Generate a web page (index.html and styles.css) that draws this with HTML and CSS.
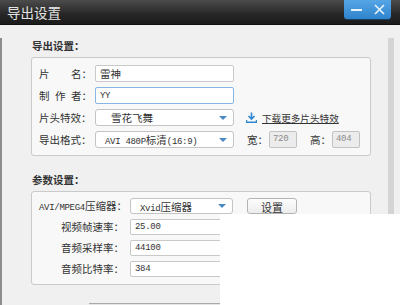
FILE: index.html
```html
<!DOCTYPE html>
<html lang="zh-CN">
<head>
  <meta charset="UTF-8">
  <title>导出设置</title>
  <link rel="stylesheet" href="styles.css">
</head>
<body>
  <div class="window">
    <div class="titlebar">
      <span class="title">导出设置</span>
      <div class="win-btns">
        <span class="wb-min"></span>
        <svg class="wb-close" width="11" height="11" viewBox="0 0 11 11"><path d="M1 1 L10 10 M10 1 L1 10" stroke="#e8f3fc" stroke-width="1.6"/></svg>
      </div>
    </div>

    <div class="content">
      <div class="section-title">导出设置：</div>
      <div class="group export-grid">
        <span class="lbl spread"><i>片</i><i>名：</i></span>
        <div class="field">雷神</div>
        <span></span>

        <span class="lbl spread"><i>制</i><i>作</i><i>者：</i></span>
        <div class="field focused"><span class="en">YY</span></div>
        <span></span>

        <span class="lbl">片头特效：</span>
        <div class="select"><span class="indent">雪花飞舞</span><span class="arrow"></span></div>
        <a class="dl-link" href="#">
          <svg width="11" height="11" viewBox="0 0 11 11"><path d="M5.5 0.5 V6.5 M2.5 4 L5.5 7 L8.5 4" stroke="#2f86d1" stroke-width="1.6" fill="none"/><path d="M0.5 8 V10.3 H10.5 V8" stroke="#2f86d1" stroke-width="1.4" fill="none"/></svg>
          <span>下载更多片头特效</span>
        </a>

        <span class="lbl">导出格式：</span>
        <div class="select"><span><span class="en">AVI 480P</span>标清<span class="en">(16:9)</span></span><span class="arrow"></span></div>
        <div class="size-row">
          <span>宽：</span><div class="field small disabled"><span class="en">720</span></div>
          <span class="h-lbl">高：</span><div class="field small disabled"><span class="en">404</span></div>
        </div>
      </div>

      <div class="section-title second">参数设置：</div>
      <div class="group param-grid">
        <span class="lbl right"><span class="en">AVI/MPEG4</span>压缩器：</span>
        <div class="select"><span><span class="en">Xvid</span>压缩器</span><span class="arrow"></span></div>
        <button class="btn">设置</button>

        <span class="lbl right">视频帧速率：</span>
        <div class="field"><span class="en">25.00</span></div>
        <span></span>

        <span class="lbl right">音频采样率：</span>
        <div class="field"><span class="en">44100</span></div>
        <span></span>

        <span class="lbl right">音频比特率：</span>
        <div class="field"><span class="en">384</span></div>
        <span></span>
      </div>
      <div class="bottom-bar"></div>
    </div>

    <div class="mask"></div>
  </div>
</body>
</html>
```

FILE: styles.css
```css
body { margin: 0; width: 400px; height: 305px; overflow: hidden; background: #8a8a8a; font-family: "Noto Sans CJK SC", sans-serif; font-size: 10.5px; color: #333; }
.window { position: relative; width: 400px; height: 305px; background: #f0f0f0; }
.titlebar { height: 24px; display: flex; justify-content: space-between; background: linear-gradient(#4c4c4c, #262626 60%, #1b1b1b); border-bottom: 1px solid #111; }
.title { color: #e4e4e4; font-size: 13.5px; line-height: 24px; padding-left: 7px; }
.win-btns { display: flex; align-items: center; gap: 12px; height: 19px; padding: 0 6px 0 7px; margin-right: 9px; background: linear-gradient(#56a6e6, #2f83cc); border-radius: 0 0 3px 3px; box-shadow: 0 1px 0 #163e61; }
.wb-min { width: 11px; height: 2px; background: #e8f3fc; }

.content { padding-left: 29px; border-left: 2px solid #8d8d8d; border-right: 6px solid #d4d4d4; width: 357px; height: 280px; }
.section-title { font-weight: bold; line-height: 16px; margin: 13px 0 3px 1px; }
.section-title.second { margin-top: 16px; }
.group { width: 340px; border: 1px solid #cacaca; border-radius: 3px; background: #f8f8f8; padding-left: 7px; box-sizing: border-box; }

.lbl { white-space: nowrap; line-height: 17px; }
.lbl.spread { display: flex; justify-content: space-between; }
.lbl i { font-style: normal; }
.lbl.right { text-align: right; }
.en { font-family: "Liberation Mono", monospace; font-size: 9px; letter-spacing: -0.3px; }

.field { background: #fff; border: 1px solid #c9c9c9; border-radius: 2px; padding-left: 4px; display: flex; align-items: center; font-size: 10.5px; box-sizing: border-box; }
.field.focused { border-color: #86b6e2; }
.field.small { width: 28px; padding-left: 3px; }
.field.disabled { background: #ececec; color: #8c8c8c; border-color: #c2c2c2; }
.select { background: #fff; border: 1px solid #c4c4c4; border-radius: 3px; padding: 0 6px 0 9px; display: flex; align-items: center; justify-content: space-between; box-sizing: border-box; }
.select .indent { padding-left: 6px; }
.arrow { width: 0; height: 0; border-left: 4px solid transparent; border-right: 4px solid transparent; border-top: 4px solid #4b89c4; }

.export-grid { display: grid; grid-template-columns: 53px 139px auto; grid-auto-rows: 17px; column-gap: 3px; row-gap: 5px; padding: 7px 0 7px 7px; }
.dl-link { display: flex; align-items: center; gap: 5px; margin-left: 9px; color: #333; text-decoration: none; font-size: 9.6px; }
.dl-link span { text-decoration: underline; }
.size-row { display: flex; align-items: stretch; margin-left: 10px; line-height: 17px; }
.size-row .field { margin-left: 1px; }
.size-row .h-lbl { margin-left: 13px; }

.param-grid { display: grid; grid-template-columns: 85px 103px auto; grid-auto-rows: 16px; column-gap: 6px; row-gap: 5px; padding: 6px 0 7px 7px; }
.param-grid .lbl { line-height: 16px; }
.btn { width: 50px; margin-left: 8px; padding: 0; font: inherit; font-size: 11px; color: #333; background: linear-gradient(#fdfdfd, #ececec); border: 1px solid #b3b3b3; border-radius: 3px; }

.bottom-bar { margin: 18px 0 0 58px; width: 200px; height: 4px; border-top: 1px solid #a9a9a9; background: #e6e6e6; }
.mask { position: absolute; left: 220px; top: 214px; right: 0; bottom: 0; background: #fff; }
```
